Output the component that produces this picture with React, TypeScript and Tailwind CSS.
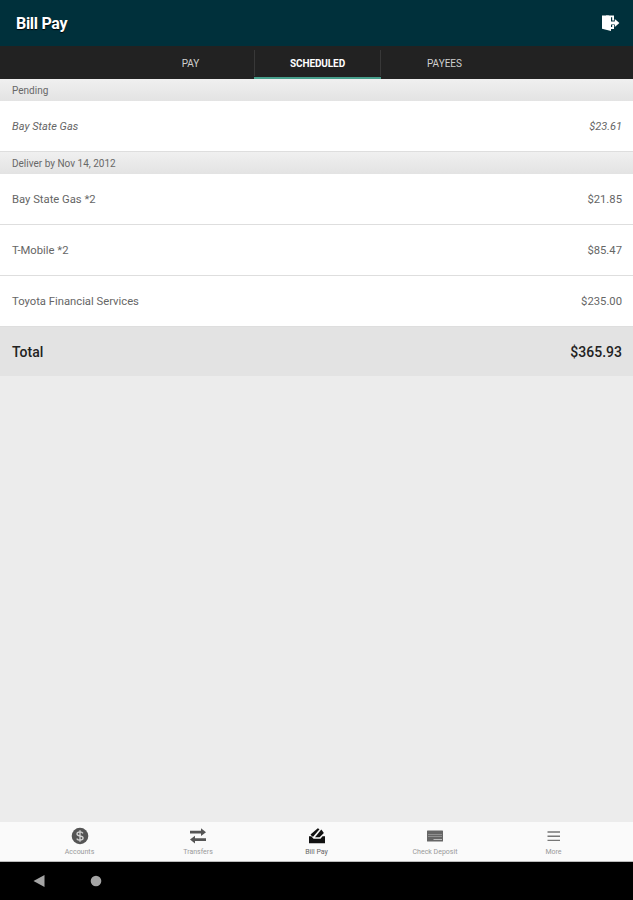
import type { ReactNode } from 'react';
import clsx from 'clsx';

type Payment = {
  payee: string;
  amount: string;
};

const scheduled: Payment[] = [
  { payee: 'Bay State Gas *2', amount: '$21.85' },
  { payee: 'T-Mobile *2', amount: '$85.47' },
  { payee: 'Toyota Financial Services', amount: '$235.00' },
];

const tabs = ['PAY', 'SCHEDULED', 'PAYEES'];

function SignOutIcon() {
  return (
    <svg width="20" height="20" viewBox="0 0 20 20" fill="#fff">
      <path d="M2 2.500h6.500L11 4v14L2 15.800z" />
      <path d="M6 2.500h8v5h-1.800V4.300H6zM9 14h3.200v-2h1.800v4H9z" />
      <path d="M10 8.500h4.800V6l4.600 4-4.600 4v-2.500H10z" />
    </svg>
  );
}

function AccountsIcon() {
  return (
    <svg width="18" height="18" viewBox="0 0 18 18">
      <circle cx="9" cy="9" r="8.300" fill="#555" />
      <path
        d="M12 6.300C11.300 5.200 10.300 4.800 9 4.800c-1.800 0-3 .8-3 2.100 0 3 6.100 1.200 6.100 4.200 0 1.300-1.300 2.100-3.100 2.100-1.500 0-2.600-.5-3.300-1.600M9 3.200v11.600"
        fill="none"
        stroke="#d4d4d4"
        strokeWidth="1.300"
      />
    </svg>
  );
}

function TransfersIcon() {
  return (
    <svg width="18" height="18" viewBox="0 0 18 18" fill="#555">
      <path d="M1 3.800h11V1.300l5 3.900-5 3.900V6.600H1z" />
      <path d="M17 11.200H6V8.700l-5 3.900 5 3.900V14h11z" />
    </svg>
  );
}

function BillPayIcon() {
  return (
    <svg width="18" height="18" viewBox="0 0 18 18" fill="#111">
      <path d="M1 9.300h2.300l2.200 2.500h7l2-2.500H17v7H1z" />
      <path d="M2.500 7.500 9.800 1.200l1.700 1.100L5.300 9.500H4.200z" />
      <path d="M7 10.300 13.300 2.600l2.600 3.400-4.300 4.300z" />
    </svg>
  );
}

function CheckIcon() {
  return (
    <svg width="18" height="18" viewBox="0 0 18 18">
      <rect x="1" y="3.500" width="16" height="11" rx=".6" fill="#666" />
      <path d="M2 7.500h14M2 9.500h14" stroke="#909090" strokeWidth="1" />
      <path d="M7.500 12.500h8.500" stroke="#bbb" strokeWidth="1" />
    </svg>
  );
}

function MoreIcon() {
  return (
    <svg width="18" height="18" viewBox="0 0 18 18">
      <path d="M2.500 5h12.500M2.500 9.200h12.500M2.500 13.400h12.500" stroke="#777" strokeWidth="1.400" />
    </svg>
  );
}

function SectionHeader({ children }: { children: ReactNode }) {
  return (
    <div className="flex h-[22px] items-center bg-linear-to-b from-[#f0f0f0] to-[#e3e3e3] px-3 text-[10px] text-[#686868]">
      {children}
    </div>
  );
}

function PaymentRow({ payment, pending }: { payment: Payment; pending?: boolean }) {
  return (
    <div
      className={clsx(
        'flex h-[51px] items-center justify-between border-b border-[#dedede] bg-white pt-[3px] pr-[11px] pl-3 text-[#666]',
        pending ? 'text-[11px] italic' : 'text-[11.250px]',
      )}
    >
      <span>{payment.payee}</span>
      <span>{payment.amount}</span>
    </div>
  );
}

const navItems = [
  { label: 'Accounts', icon: <AccountsIcon /> },
  { label: 'Transfers', icon: <TransfersIcon /> },
  { label: 'Bill Pay', icon: <BillPayIcon />, active: true },
  { label: 'Check Deposit', icon: <CheckIcon /> },
  { label: 'More', icon: <MoreIcon /> },
];

export default function App() {
  return (
    <div className="flex h-[900px] w-[633px] flex-col overflow-hidden bg-[#ececec] font-[Roboto,sans-serif]">
      <header className="flex h-[46px] shrink-0 items-center justify-between bg-[#00303b] pr-[13px] pl-4">
        <h1 className="pt-px text-[16px] font-bold tracking-[-0.3px] text-white [text-shadow:0_1px_1px_#000]">Bill Pay</h1>
        <button aria-label="Sign out">
          <SignOutIcon />
        </button>
      </header>

      <nav className="flex h-[33px] shrink-0 justify-center bg-[#222] pl-[2px] text-[10px]">
        {tabs.map((tab) => (
          <div
            key={tab}
            className={clsx(
              'flex w-[127px] flex-col border-b-2',
              tab === 'SCHEDULED' ? 'border-[#48a08d] font-bold text-white' : 'border-[#222] text-[#d0d0d0]',
            )}
          >
            <div
              className={clsx(
                'mt-1 flex h-[26px] items-center justify-center',
                tab === 'SCHEDULED' && 'border-x border-[#383838] tracking-[-0.1px]',
              )}
            >
              {tab}
            </div>
          </div>
        ))}
      </nav>

      <main className="flex-1">
        <SectionHeader>Pending</SectionHeader>
        <PaymentRow payment={{ payee: 'Bay State Gas', amount: '$23.61' }} pending />
        <SectionHeader>Deliver by Nov 14, 2012</SectionHeader>
        {scheduled.map((payment) => (
          <PaymentRow key={payment.payee} payment={payment} />
        ))}
        <div className="flex h-[49px] items-center justify-between bg-[#e3e3e3] pt-[2px] pr-[11px] pl-3 text-[14px] font-medium text-[#222]">
          <span>Total</span>
          <span>$365.93</span>
        </div>
      </main>

      <nav className="flex h-10 shrink-0 justify-center border-b border-[#bbb] bg-[#fafafa]">
        {navItems.map((item) => (
          <div key={item.label} className="flex w-[118.500px] flex-col items-center pt-[5px]">
            {item.icon}
            <span className={clsx('mt-[3px] text-[7px] leading-[8px]', item.active ? 'text-[#666]' : 'text-[#999]')}>
              {item.label}
            </span>
          </div>
        ))}
      </nav>

      <footer className="flex h-[38px] shrink-0 items-center bg-black pl-[33px]">
        <svg width="80" height="14" viewBox="0 0 80 14" fill="#a5a5a5">
          <path d="M.5 7 11.500 1v12z" />
          <circle cx="63" cy="7" r="5.300" />
        </svg>
      </footer>
    </div>
  );
}
